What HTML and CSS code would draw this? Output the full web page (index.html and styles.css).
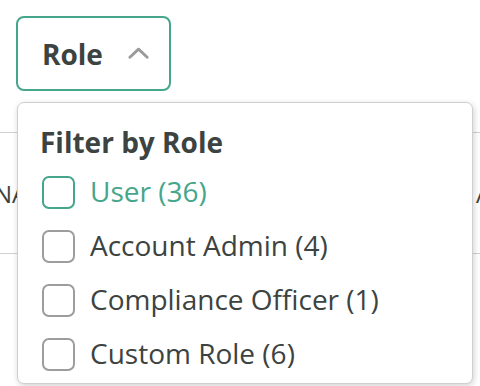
FILE: index.html
```html
<!DOCTYPE html>
<html lang="en">
<head>
  <meta charset="UTF-8" />
  <meta name="viewport" content="width=device-width, initial-scale=1" />
  <title>Role filter</title>
  <link rel="stylesheet" href="styles.css">
</head>
<body>
  <div class="page">
    <div class="filter">
      <button class="filter-btn">
        Role
        <svg class="chevron" width="22" height="12" viewBox="0 0 22 12">
          <polyline points="2,10.5 11,2 20,10.5" fill="none" stroke="#9b9b9b" stroke-width="3" stroke-linecap="round" stroke-linejoin="round" />
        </svg>
      </button>

      <div class="dropdown">
        <h3>Filter by Role</h3>
        <label class="option active"><span class="box"></span>User (36)</label>
        <label class="option"><span class="box"></span>Account Admin (4)</label>
        <label class="option"><span class="box"></span>Compliance Officer (1)</label>
        <label class="option"><span class="box"></span>Custom Role (6)</label>
      </div>
    </div>

    <div class="table-head">
      <span>NAME</span>
      <span>ACCOUNT</span>
    </div>
  </div>
</body>
</html>
```

FILE: styles.css
```css
body {
  font-family: 'Open Sans', 'DejaVu Sans', sans-serif;
  margin: 0;
  color: #3c4341;
  background: #fff;
}

.page {
  height: 386px;
  padding-top: 16px;
  box-sizing: border-box;
  overflow: hidden;
}

.filter {
  position: relative;
  margin-left: 16px;
}

.filter-btn {
  display: inline-flex;
  align-items: center;
  box-sizing: border-box;
  height: 75px;
  width: 155px;
  padding: 0 20px 0 24px;
  border: 2px solid #45a68b;
  border-radius: 8px;
  background: #fff;
  font-family: inherit;
  font-size: 28px;
  font-weight: 700;
  color: #3c4341;
  gap: 25px;
  cursor: pointer;
}

.chevron {
  margin-top: -2px;
}

.dropdown {
  position: absolute;
  top: 86px;
  left: 1px;
  width: 456px;
  box-sizing: border-box;
  padding: 20px 20px 3px 20px;
  background: #fff;
  border: 1px solid #cfcfcf;
  border-radius: 7px;
  box-shadow: 1px 2px 6px rgba(0, 0, 0, 0.18);
  z-index: 2;
}

.dropdown h3 {
  margin: 0 0 3px 0;
  padding-left: 2px;
  font-size: 28px;
  font-weight: 700;
  line-height: 38px;
}

.option {
  display: flex;
  align-items: center;
  height: 54px;
  padding-left: 4px;
  font-size: 28px;
  color: #3c4341;
  cursor: pointer;
}

.box {
  width: 33px;
  height: 33px;
  box-sizing: border-box;
  border: 2px solid #9d9d9d;
  border-radius: 7px;
  margin: 2px 15px 0 0;
  flex: none;
}

.option.active {
  color: #45a68b;
}

.option.active .box {
  border-color: #45a68b;
}

.table-head {
  display: grid;
  grid-template-columns: 482px auto;
  align-items: center;
  margin: 41px 0 0 -6px;
  height: 120px;
  border-top: 1px solid #d0d0d0;
  border-bottom: 1px solid #d0d0d0;
  font-size: 24px;
  color: #3c4341;
  white-space: nowrap;
}
```
